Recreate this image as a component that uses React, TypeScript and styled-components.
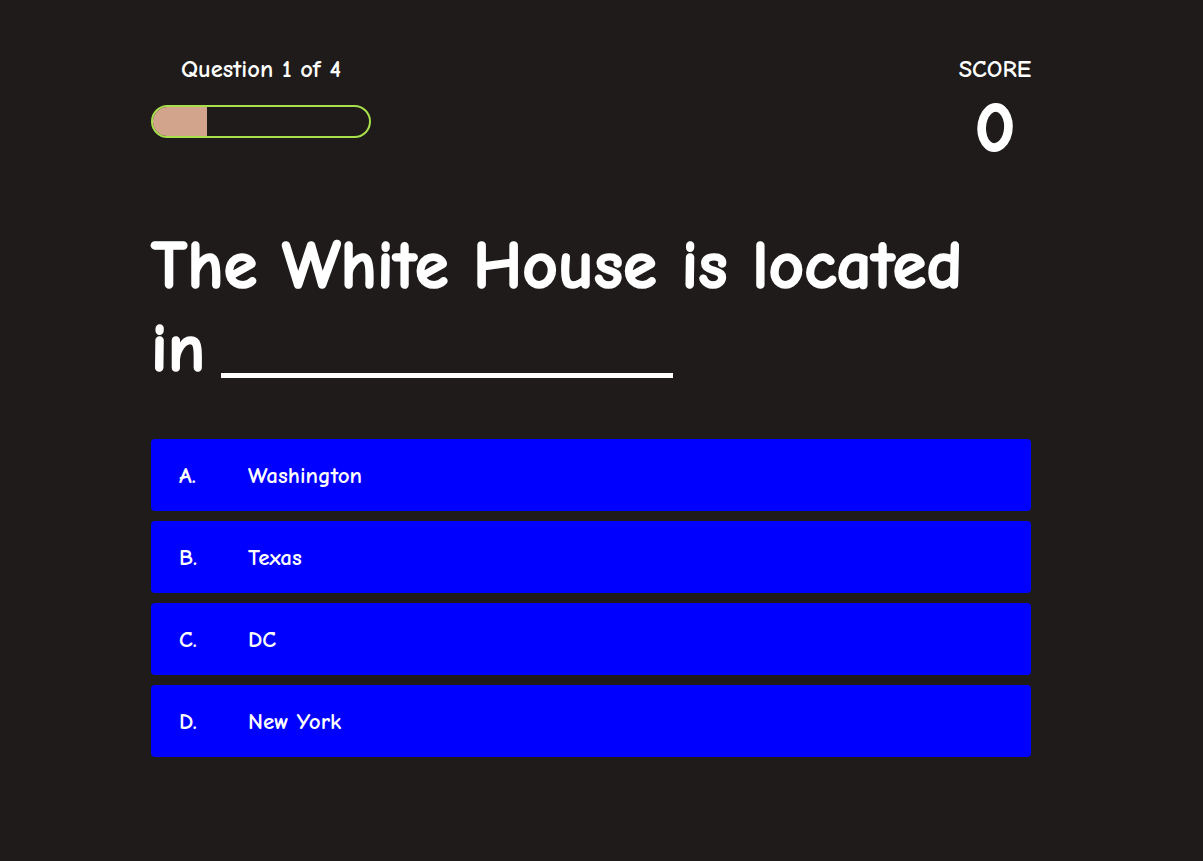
import React from "react";
import styled, { createGlobalStyle } from "styled-components";

const Global = createGlobalStyle`
  html, body {
    margin: 0;
    padding: 0;
    background: #1f1b1a;
    min-height: 100%;
  }
  body {
    font-family: "Comic Sans MS", "Comic Neue", "Lato", sans-serif;
    color: #ffffff;
  }
`;

const Page = styled.div`
  min-height: 861px;
  background: #1f1b1a;
  padding: 53px 0 0 151px;
  box-sizing: border-box;
`;

const Quiz = styled.div`
  width: 880px;
`;

const Header = styled.header`
  display: flex;
  justify-content: space-between;
  align-items: flex-start;
`;

const ProgressCol = styled.div`
  width: 220px;
  display: flex;
  flex-direction: column;
  align-items: center;
  gap: 20px;
`;

const Label = styled.div`
  font-size: 24.5px;
  font-weight: 700;
  line-height: 32px;
  color: #fff;
  white-space: nowrap;
`;

const Bar = styled.div`
  width: 220px;
  height: 33px;
  box-sizing: border-box;
  border: 2px solid #a8e04b;
  border-radius: 17px;
  overflow: hidden;
  background: #1f1b1a;
`;

const Fill = styled.div`
  height: 100%;
  background: #d3a48c;
`;

const ScoreCol = styled.div`
  display: flex;
  flex-direction: column;
  align-items: center;
  width: 74px;
  margin-right: -1px;
`;

const ScoreValue = styled.div`
  font-size: 70px;
  font-weight: 700;
  line-height: 70px;
  margin-top: 9px;
  -webkit-text-stroke: 2px #fff;
`;

const Question = styled.h1`
  margin: 60px 0 0;
  font-size: 69px;
  font-weight: 700;
  line-height: 83px;
  color: #fff;
  -webkit-text-stroke: 1.6px #fff;
`;

const NoWrap = styled.span`
  white-space: nowrap;
`;

const Blank = styled.span`
  display: inline-block;
  width: 452px;
  height: 5px;
  margin-left: 16px;
  background: #fff;
  vertical-align: -7px;
`;

const Options = styled.div`
  margin-top: 49px;
  display: flex;
  flex-direction: column;
  gap: 10px;
`;

const Option = styled.button`
  all: unset;
  box-sizing: border-box;
  display: flex;
  align-items: center;
  height: 72px;
  padding-left: 28px;
  background: #0000ff;
  border-radius: 4px;
  font-family: inherit;
  font-size: 23px;
  font-weight: 700;
  color: #fff;
  cursor: pointer;
`;

const Letter = styled.span`
  width: 69px;
`;

const options = [
  { letter: "A.", text: "Washington" },
  { letter: "B.", text: "Texas" },
  { letter: "C.", text: "DC" },
  { letter: "D.", text: "New York" },
];

export default function App() {
  const progress = 1 / 4;
  return (
    <>
      <Global />
      <Page>
        <Quiz>
          <Header>
            <ProgressCol>
              <Label>Question 1 of 4</Label>
              <Bar>
                <Fill style={{ width: `${progress * 100}%` }} />
              </Bar>
            </ProgressCol>
            <ScoreCol>
              <Label>SCORE</Label>
              <ScoreValue>0</ScoreValue>
            </ScoreCol>
          </Header>
          <Question>
            The White House is located{" "}
            <NoWrap>
              in<Blank />
            </NoWrap>
          </Question>
          <Options>
            {options.map((o) => (
              <Option key={o.letter}>
                <Letter>{o.letter}</Letter>
                <span>{o.text}</span>
              </Option>
            ))}
          </Options>
        </Quiz>
      </Page>
    </>
  );
}
